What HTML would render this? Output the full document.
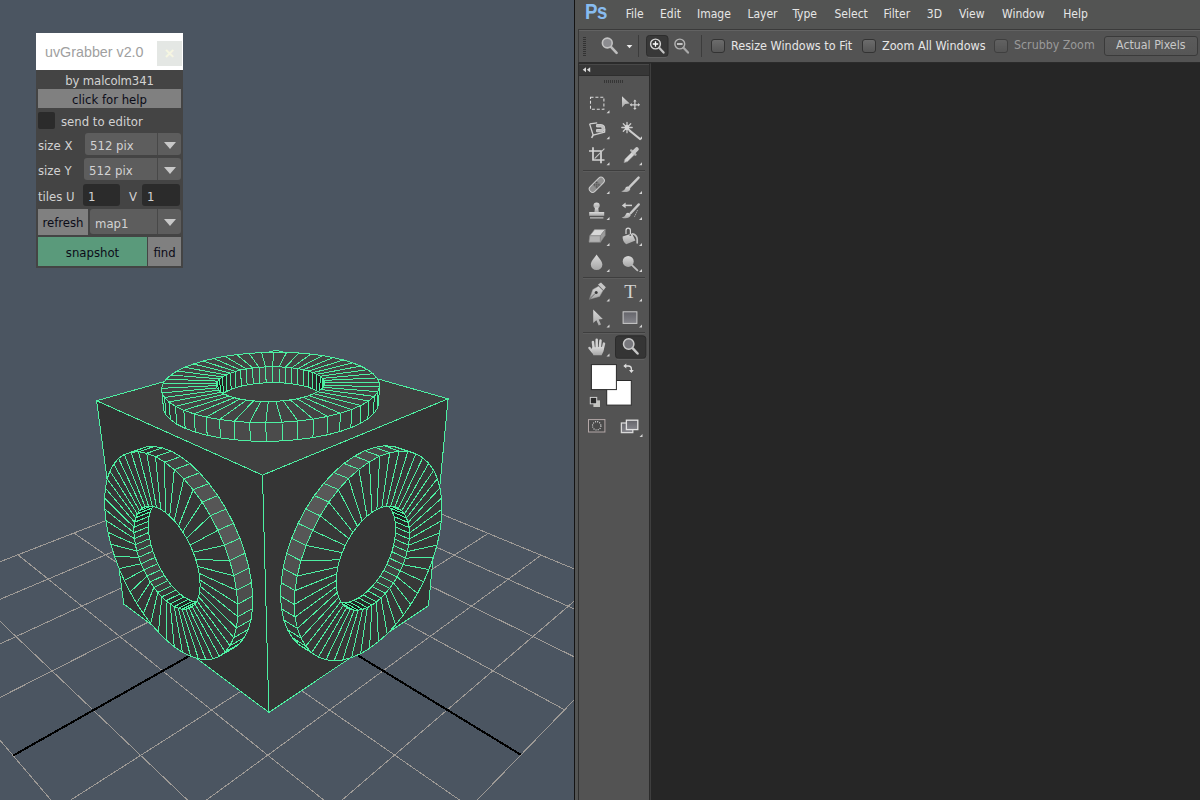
<!DOCTYPE html>
<html><head><meta charset="utf-8"><title>uvGrabber</title>
<style>
*{box-sizing:border-box;margin:0;padding:0}
html,body{width:1200px;height:800px;overflow:hidden;background:#4b5561;font-family:"DejaVu Sans Condensed","Liberation Sans",sans-serif}
.abs{position:absolute}
#maya{position:absolute;left:0;top:0;width:574px;height:800px;background:#4b5561;overflow:hidden}
#scene{position:absolute;left:0;top:0}
/* uvGrabber */
#uvg{position:absolute;left:36px;top:33px;width:147px;height:235px;background:#444;font-size:13px;color:#d2d2d2}
#uvg .title{position:absolute;left:0;top:0;width:147px;height:37px;background:#fff}
#uvg .title span{position:absolute;left:9px;top:10px;font-family:"Liberation Sans",sans-serif;font-size:14.3px;color:#a0a0a0;white-space:nowrap;line-height:18px}
#uvg .close{position:absolute;left:121px;top:8px;width:25px;height:25px;background:#e4e7e4;color:#f6f6e2;text-align:center;font-size:17px;font-weight:bold;line-height:25px;font-family:"Liberation Sans",sans-serif}
#uvg .t{position:absolute;white-space:nowrap;line-height:16px;margin-top:1px}
#uvg .btn{position:absolute;background:#808080;color:#0c0c18;text-align:center;white-space:nowrap;padding-top:1px}
#uvg .dd{position:absolute;background:#5d5d5d;border-radius:3px}
#uvg .dd i{position:absolute;right:23px;top:0;bottom:0;width:1px;background:#484848}
#uvg .dd b{position:absolute;right:5.5px;top:8.5px;width:0;height:0;border-left:6px solid transparent;border-right:6px solid transparent;border-top:7px solid #c8c8c8}
#uvg .fld{position:absolute;background:#2b2b2b;border-radius:3px}
/* photoshop */
#ps{position:absolute;left:575px;top:0;width:625px;height:800px;background:#535453;font-size:12px;color:#e6e6e6}
#ps .edge{position:absolute;left:-1px;top:0;width:1px;height:800px;background:#141414}
#ps .menu span{position:absolute;top:5.800px;line-height:16px;white-space:nowrap;font-size:12px}
#ps .logo{position:absolute;left:10px;top:-2px;font-family:"Liberation Sans",sans-serif;font-weight:bold;font-size:22.500px;color:#88bcf0;letter-spacing:-0.5px;line-height:28px;transform-origin:0 0;transform:scaleX(.83)}
#ps .opt{position:absolute;left:3px;top:29px;width:622px;height:34px;border-top:1px solid #3a3a3a;border-left:1px solid #3a3a3a;border-bottom:1px solid #2b2b2b;background:#535353;box-shadow:inset 0 1px 0 #626262}
#ps .cb{position:absolute;top:39px;width:14px;height:14px;border:1px solid #333;border-radius:3px;background:linear-gradient(#6c6c6c,#565656)}
#ps .lbl{position:absolute;top:37px;line-height:17px;white-space:nowrap;font-size:12.500px}
#ps .canvas{position:absolute;left:76px;top:63px;width:549px;height:737px;background:#262626}
#ps .tb{position:absolute;left:3px;top:63px;width:73px;height:737px;background:#535353;border-left:1px solid #2e2e2e;border-right:1px solid #3e3e3e;border-top:1px solid #2b2b2b;box-shadow:inset -1px 0 0 #2b2b2b}
#ps .tbh{position:absolute;left:4px;top:64px;width:70px;height:12px;background:#373737;border-top:1px solid #484848;border-bottom:1px solid #2e2e2e}
</style></head><body>
<div id="maya">
<svg id="scene" width="575" height="800" viewBox="0 0 575 800" shape-rendering="crispEdges">
<style>.g{stroke:#9e9a96;stroke-width:1}.ax{stroke:#000;stroke-width:2}.m polygon{stroke:#4df0a2;stroke-width:1;stroke-linejoin:round}</style>
<line class="g" x1="286.9" y1="450.3" x2="-114.1" y2="606.1"/>
<line class="g" x1="286.9" y1="450.3" x2="664.8" y2="606.3"/>
<line class="g" x1="320.5" y1="464.2" x2="-88.1" y2="636.5"/>
<line class="g" x1="251.4" y1="464.1" x2="635.5" y2="636.5"/>
<line class="g" x1="357.1" y1="479.3" x2="-58.8" y2="671.0"/>
<line class="g" x1="212.9" y1="479.0" x2="602.4" y2="670.7"/>
<line class="g" x1="396.9" y1="495.7" x2="-25.4" y2="710.3"/>
<line class="g" x1="170.8" y1="495.4" x2="564.6" y2="709.8"/>
<line class="g" x1="488.3" y1="533.4" x2="57.9" y2="808.2"/>
<line class="g" x1="74.0" y1="533.0" x2="470.1" y2="807.3"/>
<line class="g" x1="541.1" y1="555.2" x2="110.7" y2="870.1"/>
<line class="g" x1="17.9" y1="554.8" x2="410.1" y2="869.3"/>
<line class="g" x1="599.6" y1="579.4" x2="173.7" y2="944.2"/>
<line class="g" x1="-44.4" y1="579.0" x2="338.1" y2="943.6"/>
<line class="g" x1="664.8" y1="606.3" x2="250.3" y2="1034.3"/>
<line class="g" x1="-114.1" y1="606.1" x2="250.3" y2="1034.3"/>
<line class="ax" x1="440.5" y1="513.7" x2="13.1" y2="755.6"/>
<line class="ax" x1="124.7" y1="513.3" x2="520.9" y2="754.8"/>
<g class="m">
<polygon fill="#404040" points="276.2,350.1 448.1,398.8 262.5,475.1 96.6,400.7"/>
<polygon fill="#333333" points="123.8,604.1 268.9,712.4 262.5,475.1 96.6,400.7"/>
<polygon fill="#353535" points="428.5,605.7 268.9,712.4 262.5,475.1 448.1,398.8"/>
<polygon fill="#090909" points="217.2,402.4 217.5,400.1 216.6,383.4 216.3,385.6"/>
<polygon fill="#0f0f0f" points="217.5,400.1 218.6,397.7 217.7,381.1 216.6,383.4"/>
<polygon fill="#161616" points="218.6,397.7 220.6,395.4 219.7,378.9 217.7,381.1"/>
<polygon fill="#1e1e1e" points="220.6,395.4 223.4,393.3 222.6,376.9 219.7,378.9"/>
<polygon fill="#262626" points="223.4,393.3 227.0,391.2 226.2,374.9 222.6,376.9"/>
<polygon fill="#2d2d2d" points="227.0,391.2 231.2,389.3 230.4,373.1 226.2,374.9"/>
<polygon fill="#353535" points="231.2,389.3 236.0,387.7 235.3,371.5 230.4,373.1"/>
<polygon fill="#3b3b3b" points="236.0,387.7 241.3,386.2 240.7,370.1 235.3,371.5"/>
<polygon fill="#414141" points="241.3,386.2 247.1,385.0 246.5,369.0 240.7,370.1"/>
<polygon fill="#454545" points="247.1,385.0 253.2,384.0 252.7,368.0 246.5,369.0"/>
<polygon fill="#494949" points="253.2,384.0 259.6,383.3 259.1,367.3 252.7,368.0"/>
<polygon fill="#4b4b4b" points="259.6,383.3 266.1,382.8 265.7,366.9 259.1,367.3"/>
<polygon fill="#4c4c4c" points="266.1,382.8 272.6,382.7 272.3,366.7 265.7,366.9"/>
<polygon fill="#4b4b4b" points="272.6,382.7 279.2,382.8 279.0,366.8 272.3,366.7"/>
<polygon fill="#494949" points="279.2,382.8 285.6,383.1 285.5,367.2 279.0,366.8"/>
<polygon fill="#464646" points="285.6,383.1 291.9,383.8 291.8,367.8 285.5,367.2"/>
<polygon fill="#424242" points="291.9,383.8 297.8,384.7 297.8,368.6 291.8,367.8"/>
<polygon fill="#3d3d3d" points="297.8,384.7 303.3,385.8 303.3,369.7 297.8,368.6"/>
<polygon fill="#373737" points="303.3,385.8 308.4,387.2 308.5,371.0 303.3,369.7"/>
<polygon fill="#303030" points="308.4,387.2 312.9,388.9 313.0,372.6 308.5,371.0"/>
<polygon fill="#282828" points="312.9,388.9 316.7,390.7 316.9,374.3 313.0,372.6"/>
<polygon fill="#212121" points="316.7,390.7 319.9,392.7 320.1,376.2 316.9,374.3"/>
<polygon fill="#191919" points="319.9,392.7 322.2,394.9 322.4,378.3 320.1,376.2"/>
<polygon fill="#121212" points="322.2,394.9 323.7,397.1 324.0,380.4 322.4,378.3"/>
<polygon fill="#0b0b0b" points="323.7,397.1 324.4,399.5 324.6,382.7 324.0,380.4"/>
<polygon fill="#444444" points="309.0,395.6 303.4,397.3 340.2,413.3 351.5,409.5"/>
<polygon fill="#444444" points="303.4,397.3 297.2,398.8 327.3,416.5 340.2,413.3"/>
<polygon fill="#444444" points="297.2,398.8 290.4,399.9 313.1,419.1 327.3,416.5"/>
<polygon fill="#444444" points="290.4,399.9 283.2,400.8 297.9,421.0 313.1,419.1"/>
<polygon fill="#444444" points="283.2,400.8 275.8,401.3 282.0,422.2 297.9,421.0"/>
<polygon fill="#444444" points="275.8,401.3 268.3,401.5 265.8,422.7 282.0,422.2"/>
<polygon fill="#444444" points="268.3,401.5 260.8,401.4 249.7,422.4 265.8,422.7"/>
<polygon fill="#444444" points="260.8,401.4 253.5,400.9 234.2,421.3 249.7,422.4"/>
<polygon fill="#444444" points="253.5,400.9 246.5,400.1 219.5,419.5 234.2,421.3"/>
<polygon fill="#444444" points="246.5,400.1 240.0,399.1 206.0,417.0 219.5,419.5"/>
<polygon fill="#444444" points="240.0,399.1 234.2,397.7 194.0,413.9 206.0,417.0"/>
<polygon fill="#444444" points="234.2,397.7 229.0,396.1 183.8,410.3 194.0,413.9"/>
<polygon fill="#444444" points="229.0,396.1 224.7,394.2 175.4,406.3 183.8,410.3"/>
<polygon fill="#444444" points="224.7,394.2 221.2,392.3 168.9,402.0 175.4,406.3"/>
<polygon fill="#444444" points="221.2,392.3 218.6,390.1 164.5,397.5 168.9,402.0"/>
<polygon fill="#444444" points="218.6,390.1 217.0,387.9 162.1,392.9 164.5,397.5"/>
<polygon fill="#444444" points="217.0,387.9 216.3,385.6 161.6,388.3 162.1,392.9"/>
<polygon fill="#444444" points="216.3,385.6 216.6,383.4 163.0,383.7 161.6,388.3"/>
<polygon fill="#444444" points="216.6,383.4 217.7,381.1 166.1,379.2 163.0,383.7"/>
<polygon fill="#444444" points="217.7,381.1 219.7,378.9 170.9,375.0 166.1,379.2"/>
<polygon fill="#444444" points="219.7,378.9 222.6,376.9 177.2,371.0 170.9,375.0"/>
<polygon fill="#444444" points="222.6,376.9 226.2,374.9 184.7,367.3 177.2,371.0"/>
<polygon fill="#444444" points="226.2,374.9 230.4,373.1 193.5,364.0 184.7,367.3"/>
<polygon fill="#444444" points="230.4,373.1 235.3,371.5 203.2,361.0 193.5,364.0"/>
<polygon fill="#444444" points="235.3,371.5 240.7,370.1 213.8,358.5 203.2,361.0"/>
<polygon fill="#444444" points="240.7,370.1 246.5,369.0 225.0,356.3 213.8,358.5"/>
<polygon fill="#444444" points="246.5,369.0 252.7,368.0 236.8,354.6 225.0,356.3"/>
<polygon fill="#444444" points="252.7,368.0 259.1,367.3 249.0,353.4 236.8,354.6"/>
<polygon fill="#444444" points="259.1,367.3 265.7,366.9 261.5,352.6 249.0,353.4"/>
<polygon fill="#444444" points="265.7,366.9 272.3,366.7 274.0,352.3 261.5,352.6"/>
<polygon fill="#444444" points="272.3,366.7 279.0,366.8 286.6,352.4 274.0,352.3"/>
<polygon fill="#444444" points="279.0,366.8 285.5,367.2 298.9,353.0 286.6,352.4"/>
<polygon fill="#444444" points="285.5,367.2 291.8,367.8 310.9,354.1 298.9,353.0"/>
<polygon fill="#444444" points="291.8,367.8 297.8,368.6 322.4,355.6 310.9,354.1"/>
<polygon fill="#444444" points="297.8,368.6 303.3,369.7 333.3,357.6 322.4,355.6"/>
<polygon fill="#444444" points="303.3,369.7 308.5,371.0 343.5,360.0 333.3,357.6"/>
<polygon fill="#444444" points="308.5,371.0 313.0,372.6 352.7,362.9 343.5,360.0"/>
<polygon fill="#444444" points="313.0,372.6 316.9,374.3 360.8,366.1 352.7,362.9"/>
<polygon fill="#444444" points="316.9,374.3 320.1,376.2 367.6,369.7 360.8,366.1"/>
<polygon fill="#444444" points="320.1,376.2 322.4,378.3 373.1,373.7 367.6,369.7"/>
<polygon fill="#444444" points="322.4,378.3 324.0,380.4 376.9,377.9 373.1,373.7"/>
<polygon fill="#444444" points="324.0,380.4 324.6,382.7 379.1,382.4 376.9,377.9"/>
<polygon fill="#444444" points="324.6,382.7 324.3,385.0 379.4,387.0 379.1,382.4"/>
<polygon fill="#444444" points="324.3,385.0 323.1,387.3 377.8,391.7 379.4,387.0"/>
<polygon fill="#444444" points="323.1,387.3 320.9,389.5 374.3,396.4 377.8,391.7"/>
<polygon fill="#444444" points="320.9,389.5 317.8,391.7 368.6,401.0 374.3,396.4"/>
<polygon fill="#444444" points="317.8,391.7 313.8,393.8 361.0,405.4 368.6,401.0"/>
<polygon fill="#444444" points="313.8,393.8 309.0,395.6 351.5,409.5 361.0,405.4"/>
<polygon fill="#3e3e3e" points="350.9,427.7 339.8,431.6 340.2,413.3 351.5,409.5"/>
<polygon fill="#424242" points="339.8,431.6 327.0,434.9 327.3,416.5 340.2,413.3"/>
<polygon fill="#454545" points="327.0,434.9 313.0,437.6 313.1,419.1 327.3,416.5"/>
<polygon fill="#484848" points="313.0,437.6 297.9,439.6 297.9,421.0 313.1,419.1"/>
<polygon fill="#4a4a4a" points="297.9,439.6 282.2,440.9 282.0,422.2 297.9,421.0"/>
<polygon fill="#4b4b4b" points="282.2,440.9 266.2,441.4 265.8,422.7 282.0,422.2"/>
<polygon fill="#4b4b4b" points="266.2,441.4 250.4,441.0 249.7,422.4 265.8,422.7"/>
<polygon fill="#4a4a4a" points="250.4,441.0 235.0,439.8 234.2,421.3 249.7,422.4"/>
<polygon fill="#494949" points="235.0,439.8 220.5,437.9 219.5,419.5 234.2,421.3"/>
<polygon fill="#474747" points="220.5,437.9 207.2,435.3 206.0,417.0 219.5,419.5"/>
<polygon fill="#444444" points="207.2,435.3 195.3,432.1 194.0,413.9 206.0,417.0"/>
<polygon fill="#404040" points="195.3,432.1 185.2,428.3 183.8,410.3 194.0,413.9"/>
<polygon fill="#3d3d3d" points="185.2,428.3 176.8,424.1 175.4,406.3 183.8,410.3"/>
<polygon fill="#383838" points="176.8,424.1 170.4,419.6 168.9,402.0 175.4,406.3"/>
<polygon fill="#343434" points="170.4,419.6 166.0,414.9 164.5,397.5 168.9,402.0"/>
<polygon fill="#303030" points="166.0,414.9 163.6,410.0 162.1,392.9 164.5,397.5"/>
<polygon fill="#2c2c2c" points="163.6,410.0 163.1,405.1 161.6,388.3 162.1,392.9"/>
<polygon fill="#2a2a2a" points="378.6,404.1 377.0,409.0 377.8,391.7 379.4,387.0"/>
<polygon fill="#2e2e2e" points="377.0,409.0 373.4,413.9 374.3,396.4 377.8,391.7"/>
<polygon fill="#323232" points="373.4,413.9 367.9,418.8 368.6,401.0 374.3,396.4"/>
<polygon fill="#363636" points="367.9,418.8 360.4,423.4 361.0,405.4 368.6,401.0"/>
<polygon fill="#3a3a3a" points="360.4,423.4 350.9,427.7 351.5,409.5 361.0,405.4"/>
<polygon fill="#090909" points="160.0,500.8 156.9,502.4 142.0,508.3 145.1,506.7"/>
<polygon fill="#0e0e0e" points="156.9,502.4 154.2,504.8 139.4,510.7 142.0,508.3"/>
<polygon fill="#151515" points="154.2,504.8 152.0,508.0 137.3,513.9 139.4,510.7"/>
<polygon fill="#1c1c1c" points="152.0,508.0 150.3,511.9 135.7,517.7 137.3,513.9"/>
<polygon fill="#232323" points="150.3,511.9 149.1,516.3 134.6,522.2 135.7,517.7"/>
<polygon fill="#2a2a2a" points="149.1,516.3 148.4,521.3 134.0,527.2 134.6,522.2"/>
<polygon fill="#313131" points="148.4,521.3 148.3,526.8 133.9,532.7 134.0,527.2"/>
<polygon fill="#373737" points="148.3,526.8 148.7,532.5 134.4,538.6 133.9,532.7"/>
<polygon fill="#3c3c3c" points="148.7,532.5 149.6,538.6 135.4,544.7 134.4,538.6"/>
<polygon fill="#404040" points="149.6,538.6 151.0,544.8 136.8,551.0 135.4,544.7"/>
<polygon fill="#434343" points="151.0,544.8 152.8,551.1 138.7,557.3 136.8,551.0"/>
<polygon fill="#454545" points="152.8,551.1 155.1,557.4 141.1,563.7 138.7,557.3"/>
<polygon fill="#464646" points="155.1,557.4 157.8,563.6 143.8,570.0 141.1,563.7"/>
<polygon fill="#464646" points="157.8,563.6 160.9,569.6 146.9,576.1 143.8,570.0"/>
<polygon fill="#444444" points="160.9,569.6 164.2,575.4 150.3,581.9 146.9,576.1"/>
<polygon fill="#424242" points="164.2,575.4 167.9,580.7 153.9,587.4 150.3,581.9"/>
<polygon fill="#3e3e3e" points="167.9,580.7 171.7,585.7 157.8,592.4 153.9,587.4"/>
<polygon fill="#393939" points="171.7,585.7 175.8,590.1 161.8,596.9 157.8,592.4"/>
<polygon fill="#343434" points="175.8,590.1 179.9,593.9 166.0,600.8 161.8,596.9"/>
<polygon fill="#2e2e2e" points="179.9,593.9 184.1,597.1 170.1,604.0 166.0,600.8"/>
<polygon fill="#272727" points="184.1,597.1 188.3,599.5 174.3,606.6 170.1,604.0"/>
<polygon fill="#202020" points="188.3,599.5 192.4,601.2 178.3,608.3 174.3,606.6"/>
<polygon fill="#181818" points="192.4,601.2 196.3,602.1 182.2,609.2 178.3,608.3"/>
<polygon fill="#121212" points="196.3,602.1 200.0,602.1 185.9,609.3 182.2,609.2"/>
<polygon fill="#0c0c0c" points="200.0,602.1 203.4,601.2 189.2,608.5 185.9,609.3"/>
<polygon fill="#373737" points="199.9,580.0 199.1,573.4 236.5,590.3 237.8,604.1"/>
<polygon fill="#373737" points="199.1,573.4 197.7,566.5 233.8,575.7 236.5,590.3"/>
<polygon fill="#373737" points="197.7,566.5 195.7,559.4 229.7,560.6 233.8,575.7"/>
<polygon fill="#373737" points="195.7,559.4 193.2,552.2 224.4,545.3 229.7,560.6"/>
<polygon fill="#373737" points="193.2,552.2 190.1,545.2 217.9,530.3 224.4,545.3"/>
<polygon fill="#373737" points="190.1,545.2 186.6,538.3 210.4,515.7 217.9,530.3"/>
<polygon fill="#373737" points="186.6,538.3 182.7,531.9 202.1,502.1 210.4,515.7"/>
<polygon fill="#373737" points="182.7,531.9 178.6,526.0 193.1,489.7 202.1,502.1"/>
<polygon fill="#373737" points="178.6,526.0 174.2,520.6 183.8,478.8 193.1,489.7"/>
<polygon fill="#373737" points="174.2,520.6 169.7,516.1 174.3,469.6 183.8,478.8"/>
<polygon fill="#373737" points="169.7,516.1 165.2,512.3 164.8,462.2 174.3,469.6"/>
<polygon fill="#373737" points="165.2,512.3 160.7,509.3 155.5,456.7 164.8,462.2"/>
<polygon fill="#373737" points="160.7,509.3 156.4,507.3 146.7,453.3 155.5,456.7"/>
<polygon fill="#373737" points="156.4,507.3 152.3,506.2 138.5,451.8 146.7,453.3"/>
<polygon fill="#373737" points="152.3,506.2 148.5,506.0 131.0,452.2 138.5,451.8"/>
<polygon fill="#373737" points="148.5,506.0 145.1,506.7 124.3,454.5 131.0,452.2"/>
<polygon fill="#373737" points="145.1,506.7 142.0,508.3 118.6,458.4 124.3,454.5"/>
<polygon fill="#373737" points="142.0,508.3 139.4,510.7 113.8,464.0 118.6,458.4"/>
<polygon fill="#373737" points="139.4,510.7 137.3,513.9 109.9,470.9 113.8,464.0"/>
<polygon fill="#373737" points="137.3,513.9 135.7,517.7 107.2,479.0 109.9,470.9"/>
<polygon fill="#373737" points="135.7,517.7 134.6,522.2 105.4,488.2 107.2,479.0"/>
<polygon fill="#373737" points="134.6,522.2 134.0,527.2 104.6,498.3 105.4,488.2"/>
<polygon fill="#373737" points="134.0,527.2 133.9,532.7 104.8,509.1 104.6,498.3"/>
<polygon fill="#373737" points="133.9,532.7 134.4,538.6 105.9,520.5 104.8,509.1"/>
<polygon fill="#373737" points="134.4,538.6 135.4,544.7 108.0,532.3 105.9,520.5"/>
<polygon fill="#373737" points="135.4,544.7 136.8,551.0 110.9,544.3 108.0,532.3"/>
<polygon fill="#373737" points="136.8,551.0 138.7,557.3 114.6,556.5 110.9,544.3"/>
<polygon fill="#373737" points="138.7,557.3 141.1,563.7 119.1,568.6 114.6,556.5"/>
<polygon fill="#373737" points="141.1,563.7 143.8,570.0 124.3,580.5 119.1,568.6"/>
<polygon fill="#373737" points="143.8,570.0 146.9,576.1 130.1,592.0 124.3,580.5"/>
<polygon fill="#373737" points="146.9,576.1 150.3,581.9 136.5,603.1 130.1,592.0"/>
<polygon fill="#373737" points="150.3,581.9 153.9,587.4 143.4,613.6 136.5,603.1"/>
<polygon fill="#373737" points="153.9,587.4 157.8,592.4 150.7,623.4 143.4,613.6"/>
<polygon fill="#373737" points="157.8,592.4 161.8,596.9 158.4,632.2 150.7,623.4"/>
<polygon fill="#373737" points="161.8,596.9 166.0,600.8 166.3,640.1 158.4,632.2"/>
<polygon fill="#373737" points="166.0,600.8 170.1,604.0 174.3,646.8 166.3,640.1"/>
<polygon fill="#373737" points="170.1,604.0 174.3,606.6 182.5,652.3 174.3,646.8"/>
<polygon fill="#373737" points="174.3,606.6 178.3,608.3 190.5,656.3 182.5,652.3"/>
<polygon fill="#373737" points="178.3,608.3 182.2,609.2 198.4,658.8 190.5,656.3"/>
<polygon fill="#373737" points="182.2,609.2 185.9,609.3 205.9,659.7 198.4,658.8"/>
<polygon fill="#373737" points="185.9,609.3 189.2,608.5 213.0,658.9 205.9,659.7"/>
<polygon fill="#373737" points="189.2,608.5 192.3,606.9 219.4,656.3 213.0,658.9"/>
<polygon fill="#373737" points="192.3,606.9 194.9,604.3 225.2,651.9 219.4,656.3"/>
<polygon fill="#373737" points="194.9,604.3 197.0,600.9 230.0,645.7 225.2,651.9"/>
<polygon fill="#373737" points="197.0,600.9 198.6,596.7 233.8,637.7 230.0,645.7"/>
<polygon fill="#373737" points="198.6,596.7 199.6,591.8 236.4,628.0 233.8,637.7"/>
<polygon fill="#373737" points="199.6,591.8 200.1,586.2 237.8,616.7 236.4,628.0"/>
<polygon fill="#373737" points="200.1,586.2 199.9,580.0 237.8,604.1 237.8,616.7"/>
<polygon fill="#4d4d4d" points="252.7,596.1 251.6,582.5 236.5,590.3 237.8,604.1"/>
<polygon fill="#515151" points="251.6,582.5 249.0,568.1 233.8,575.7 236.5,590.3"/>
<polygon fill="#555555" points="249.0,568.1 245.1,553.2 229.7,560.6 233.8,575.7"/>
<polygon fill="#575757" points="245.1,553.2 239.9,538.1 224.4,545.3 229.7,560.6"/>
<polygon fill="#585858" points="239.9,538.1 233.5,523.3 217.9,530.3 224.4,545.3"/>
<polygon fill="#585858" points="233.5,523.3 226.1,509.0 210.4,515.7 217.9,530.3"/>
<polygon fill="#565656" points="226.1,509.0 217.8,495.6 202.1,502.1 210.4,515.7"/>
<polygon fill="#535353" points="217.8,495.6 208.9,483.5 193.1,489.7 202.1,502.1"/>
<polygon fill="#4e4e4e" points="208.9,483.5 199.6,472.8 183.8,478.8 193.1,489.7"/>
<polygon fill="#494949" points="199.6,472.8 190.1,463.7 174.3,469.6 183.8,478.8"/>
<polygon fill="#434343" points="190.1,463.7 180.6,456.5 164.8,462.2 174.3,469.6"/>
<polygon fill="#3d3d3d" points="180.6,456.5 171.3,451.2 155.5,456.7 164.8,462.2"/>
<polygon fill="#363636" points="171.3,451.2 162.4,447.9 146.7,453.3 155.5,456.7"/>
<polygon fill="#303030" points="162.4,447.9 154.0,446.5 138.5,451.8 146.7,453.3"/>
<polygon fill="#2a2a2a" points="154.0,446.5 146.4,447.0 131.0,452.2 138.5,451.8"/>
<polygon fill="#242424" points="146.4,447.0 139.6,449.3 124.3,454.5 131.0,452.2"/>
<polygon fill="#282828" points="233.5,648.2 239.3,643.8 225.2,651.9 219.4,656.3"/>
<polygon fill="#2e2e2e" points="239.3,643.8 244.3,637.5 230.0,645.7 225.2,651.9"/>
<polygon fill="#343434" points="244.3,637.5 248.2,629.5 233.8,637.7 230.0,645.7"/>
<polygon fill="#3b3b3b" points="248.2,629.5 251.0,619.8 236.4,628.0 233.8,637.7"/>
<polygon fill="#414141" points="251.0,619.8 252.5,608.6 237.8,616.7 236.4,628.0"/>
<polygon fill="#474747" points="252.5,608.6 252.7,596.1 237.8,604.1 237.8,616.7"/>
<polygon fill="#080808" points="380.6,500.8 384.3,502.4 398.5,508.4 394.9,506.8"/>
<polygon fill="#0c0c0c" points="384.3,502.4 387.6,504.9 401.7,510.8 398.5,508.4"/>
<polygon fill="#121212" points="387.6,504.9 390.3,508.1 404.4,514.0 401.7,510.8"/>
<polygon fill="#191919" points="390.3,508.1 392.5,512.0 406.5,517.9 404.4,514.0"/>
<polygon fill="#202020" points="392.5,512.0 394.1,516.5 408.0,522.5 406.5,517.9"/>
<polygon fill="#262626" points="394.1,516.5 395.1,521.6 409.0,527.6 408.0,522.5"/>
<polygon fill="#2d2d2d" points="395.1,521.6 395.6,527.1 409.4,533.1 409.0,527.6"/>
<polygon fill="#333333" points="395.6,527.1 395.5,532.9 409.2,539.1 409.4,533.1"/>
<polygon fill="#383838" points="395.5,532.9 394.8,539.1 408.5,545.3 409.2,539.1"/>
<polygon fill="#3c3c3c" points="394.8,539.1 393.6,545.4 407.2,551.6 408.5,545.3"/>
<polygon fill="#3f3f3f" points="393.6,545.4 391.8,551.7 405.4,558.1 407.2,551.6"/>
<polygon fill="#424242" points="391.8,551.7 389.5,558.1 403.1,564.6 405.4,558.1"/>
<polygon fill="#434343" points="389.5,558.1 386.8,564.4 400.3,570.9 403.1,564.6"/>
<polygon fill="#434343" points="386.8,564.4 383.6,570.4 397.1,577.0 400.3,570.9"/>
<polygon fill="#424242" points="383.6,570.4 380.1,576.2 393.5,582.9 397.1,577.0"/>
<polygon fill="#404040" points="380.1,576.2 376.2,581.6 389.6,588.4 393.5,582.9"/>
<polygon fill="#3d3d3d" points="376.2,581.6 372.1,586.5 385.4,593.4 389.6,588.4"/>
<polygon fill="#393939" points="372.1,586.5 367.7,590.9 381.0,598.0 385.4,593.4"/>
<polygon fill="#333333" points="367.7,590.9 363.2,594.8 376.5,601.9 381.0,598.0"/>
<polygon fill="#2e2e2e" points="363.2,594.8 358.6,597.9 371.9,605.1 376.5,601.9"/>
<polygon fill="#272727" points="358.6,597.9 353.9,600.3 367.3,607.6 371.9,605.1"/>
<polygon fill="#212121" points="353.9,600.3 349.4,602.0 362.7,609.3 367.3,607.6"/>
<polygon fill="#1a1a1a" points="349.4,602.0 344.9,602.8 358.3,610.2 362.7,609.3"/>
<polygon fill="#131313" points="344.9,602.8 340.7,602.8 354.1,610.3 358.3,610.2"/>
<polygon fill="#0d0d0d" points="340.7,602.8 336.7,601.9 350.1,609.4 354.1,610.3"/>
<polygon fill="#090909" points="336.7,601.9 333.1,600.2 346.6,607.7 350.1,609.4"/>
<polygon fill="#383838" points="336.2,580.6 336.7,573.9 295.0,590.6 294.3,604.4"/>
<polygon fill="#383838" points="336.7,573.9 337.8,567.0 297.2,576.0 295.0,590.6"/>
<polygon fill="#383838" points="337.8,567.0 339.7,559.8 300.9,560.8 297.2,576.0"/>
<polygon fill="#383838" points="339.7,559.8 342.2,552.6 306.1,545.5 300.9,560.8"/>
<polygon fill="#383838" points="342.2,552.6 345.3,545.5 312.6,530.4 306.1,545.5"/>
<polygon fill="#383838" points="345.3,545.5 348.9,538.6 320.2,515.8 312.6,530.4"/>
<polygon fill="#383838" points="348.9,538.6 352.9,532.2 328.9,502.1 320.2,515.8"/>
<polygon fill="#383838" points="352.9,532.2 357.4,526.2 338.4,489.6 328.9,502.1"/>
<polygon fill="#383838" points="357.4,526.2 362.1,520.8 348.5,478.6 338.4,489.6"/>
<polygon fill="#383838" points="362.1,520.8 367.0,516.2 358.9,469.3 348.5,478.6"/>
<polygon fill="#383838" points="367.0,516.2 371.9,512.4 369.4,461.8 358.9,469.3"/>
<polygon fill="#383838" points="371.9,512.4 376.9,509.4 379.7,456.2 369.4,461.8"/>
<polygon fill="#383838" points="376.9,509.4 381.8,507.4 389.7,452.7 379.7,456.2"/>
<polygon fill="#383838" points="381.8,507.4 386.4,506.2 399.1,451.1 389.7,452.7"/>
<polygon fill="#383838" points="386.4,506.2 390.8,506.0 407.9,451.5 399.1,451.1"/>
<polygon fill="#383838" points="390.8,506.0 394.9,506.8 415.8,453.8 407.9,451.5"/>
<polygon fill="#383838" points="394.9,506.8 398.5,508.4 422.8,457.7 415.8,453.8"/>
<polygon fill="#383838" points="398.5,508.4 401.7,510.8 428.7,463.3 422.8,457.7"/>
<polygon fill="#383838" points="401.7,510.8 404.4,514.0 433.6,470.3 428.7,463.3"/>
<polygon fill="#383838" points="404.4,514.0 406.5,517.9 437.4,478.6 433.6,470.3"/>
<polygon fill="#383838" points="406.5,517.9 408.0,522.5 440.0,488.0 437.4,478.6"/>
<polygon fill="#383838" points="408.0,522.5 409.0,527.6 441.5,498.2 440.0,488.0"/>
<polygon fill="#383838" points="409.0,527.6 409.4,533.1 442.0,509.3 441.5,498.2"/>
<polygon fill="#383838" points="409.4,533.1 409.2,539.1 441.3,520.8 442.0,509.3"/>
<polygon fill="#383838" points="409.2,539.1 408.5,545.3 439.7,532.8 441.3,520.8"/>
<polygon fill="#383838" points="408.5,545.3 407.2,551.6 437.0,545.1 439.7,532.8"/>
<polygon fill="#383838" points="407.2,551.6 405.4,558.1 433.4,557.4 437.0,545.1"/>
<polygon fill="#383838" points="405.4,558.1 403.1,564.6 428.9,569.6 433.4,557.4"/>
<polygon fill="#383838" points="403.1,564.6 400.3,570.9 423.6,581.7 428.9,569.6"/>
<polygon fill="#383838" points="400.3,570.9 397.1,577.0 417.5,593.4 423.6,581.7"/>
<polygon fill="#383838" points="397.1,577.0 393.5,582.9 410.8,604.5 417.5,593.4"/>
<polygon fill="#383838" points="393.5,582.9 389.6,588.4 403.4,615.1 410.8,604.5"/>
<polygon fill="#383838" points="389.6,588.4 385.4,593.4 395.5,624.9 403.4,615.1"/>
<polygon fill="#383838" points="385.4,593.4 381.0,598.0 387.2,633.8 395.5,624.9"/>
<polygon fill="#383838" points="381.0,598.0 376.5,601.9 378.5,641.6 387.2,633.8"/>
<polygon fill="#383838" points="376.5,601.9 371.9,605.1 369.6,648.3 378.5,641.6"/>
<polygon fill="#383838" points="371.9,605.1 367.3,607.6 360.6,653.7 369.6,648.3"/>
<polygon fill="#383838" points="367.3,607.6 362.7,609.3 351.6,657.6 360.6,653.7"/>
<polygon fill="#383838" points="362.7,609.3 358.3,610.2 342.7,660.0 351.6,657.6"/>
<polygon fill="#383838" points="358.3,610.2 354.1,610.3 334.1,660.8 342.7,660.0"/>
<polygon fill="#383838" points="354.1,610.3 350.1,609.4 326.0,659.8 334.1,660.8"/>
<polygon fill="#383838" points="350.1,609.4 346.6,607.7 318.4,657.1 326.0,659.8"/>
<polygon fill="#383838" points="346.6,607.7 343.4,605.1 311.6,652.6 318.4,657.1"/>
<polygon fill="#383838" points="343.4,605.1 340.8,601.6 305.8,646.2 311.6,652.6"/>
<polygon fill="#383838" points="340.8,601.6 338.7,597.4 301.0,638.1 305.8,646.2"/>
<polygon fill="#383838" points="338.7,597.4 337.2,592.4 297.4,628.4 301.0,638.1"/>
<polygon fill="#383838" points="337.2,592.4 336.3,586.8 295.1,617.0 297.4,628.4"/>
<polygon fill="#383838" points="336.3,586.8 336.2,580.6 294.3,604.4 295.1,617.0"/>
<polygon fill="#474747" points="280.5,596.2 281.1,582.6 295.0,590.6 294.3,604.4"/>
<polygon fill="#4c4c4c" points="281.1,582.6 283.1,568.2 297.2,576.0 295.0,590.6"/>
<polygon fill="#505050" points="283.1,568.2 286.7,553.3 300.9,560.8 297.2,576.0"/>
<polygon fill="#535353" points="286.7,553.3 291.7,538.2 306.1,545.5 300.9,560.8"/>
<polygon fill="#565656" points="291.7,538.2 298.1,523.3 312.6,530.4 306.1,545.5"/>
<polygon fill="#575757" points="298.1,523.3 305.7,509.0 320.2,515.8 312.6,530.4"/>
<polygon fill="#585858" points="305.7,509.0 314.3,495.6 328.9,502.1 320.2,515.8"/>
<polygon fill="#585858" points="314.3,495.6 323.7,483.3 338.4,489.6 328.9,502.1"/>
<polygon fill="#565656" points="323.7,483.3 333.7,472.5 348.5,478.6 338.4,489.6"/>
<polygon fill="#545454" points="333.7,472.5 344.0,463.4 358.9,469.3 348.5,478.6"/>
<polygon fill="#515151" points="344.0,463.4 354.5,456.1 369.4,461.8 358.9,469.3"/>
<polygon fill="#4d4d4d" points="354.5,456.1 364.8,450.7 379.7,456.2 369.4,461.8"/>
<polygon fill="#494949" points="364.8,450.7 374.8,447.3 389.7,452.7 379.7,456.2"/>
<polygon fill="#444444" points="374.8,447.3 384.3,445.8 399.1,451.1 389.7,452.7"/>
<polygon fill="#3e3e3e" points="384.3,445.8 393.1,446.3 407.9,451.5 399.1,451.1"/>
<polygon fill="#393939" points="393.1,446.3 401.1,448.6 415.8,453.8 407.9,451.5"/>
<polygon fill="#272727" points="305.3,648.8 298.4,644.2 311.6,652.6 318.4,657.1"/>
<polygon fill="#2c2c2c" points="298.4,644.2 292.5,637.8 305.8,646.2 311.6,652.6"/>
<polygon fill="#313131" points="292.5,637.8 287.5,629.7 301.0,638.1 305.8,646.2"/>
<polygon fill="#373737" points="287.5,629.7 283.8,620.0 297.4,628.4 301.0,638.1"/>
<polygon fill="#3d3d3d" points="283.8,620.0 281.5,608.8 295.1,617.0 297.4,628.4"/>
<polygon fill="#424242" points="281.5,608.8 280.5,596.2 294.3,604.4 295.1,617.0"/>
</g></svg>
<div id="uvg">
 <div class="title"><span>uvGrabber v2.0</span><div class="close">×</div></div>
 <div class="t" style="left:0;width:147px;text-align:center;top:39px;letter-spacing:-.15px">by malcolm341</div>
 <div class="btn" style="left:2px;top:56px;width:143px;height:19px;line-height:19px">click for help</div>
 <div class="fld" style="left:2px;top:79px;width:17px;height:17px;border-radius:2px"></div>
 <div class="t" style="left:25px;top:80px">send to editor</div>
 <div class="t" style="left:2px;top:104px">size X</div>
 <div class="dd" style="left:49px;top:100px;width:96px;height:22px"><span class="t" style="left:5px;top:4px">512 pix</span><i></i><b></b></div>
 <div class="t" style="left:2px;top:129px">size Y</div>
 <div class="dd" style="left:48px;top:125px;width:97px;height:22px"><span class="t" style="left:5px;top:4px">512 pix</span><i></i><b></b></div>
 <div class="t" style="left:2px;top:155px">tiles U</div>
 <div class="fld" style="left:47px;top:151px;width:37px;height:22px"><span class="t" style="left:5px;top:4px">1</span></div>
 <div class="t" style="left:93px;top:155px">V</div>
 <div class="fld" style="left:106px;top:151px;width:38px;height:22px"><span class="t" style="left:5px;top:4px">1</span></div>
 <div class="btn" style="left:2px;top:176px;width:50px;height:26px;line-height:26px">refresh</div>
 <div class="dd" style="left:54px;top:176px;width:91px;height:25px"><span class="t" style="left:5px;top:6px">map1</span><i></i><b style="top:10px"></b></div>
 <div class="btn" style="left:2px;top:204px;width:109px;height:29px;line-height:29px;background:#5a9a7b">snapshot</div>
 <div class="btn" style="left:112px;top:204px;width:33px;height:29px;line-height:29px">find</div>
</div>
</div>
<div id="ps">
 <div class="edge"></div>
 <div class="logo">Ps</div>
 <div class="menu">
  <span style="left:50.700px">File</span><span style="left:85px">Edit</span><span style="left:122px">Image</span><span style="left:172.400px">Layer</span><span style="left:217.400px">Type</span><span style="left:259.500px">Select</span><span style="left:308.500px">Filter</span><span style="left:351.800px">3D</span><span style="left:384px">View</span><span style="left:427px">Window</span><span style="left:488.200px">Help</span>
 </div>
 <div class="opt"></div>
 <div class="canvas"></div>
 <div class="tb"></div>
 <div class="tbh"></div>
 <svg class="abs" style="left:0;top:0" width="625" height="800" viewBox="575 0 625 800">
<defs>
<linearGradient id="ig" x1="0" y1="0" x2="0" y2="1"><stop offset="0" stop-color="#dadada"/><stop offset="1" stop-color="#a6a6a6"/></linearGradient>
<linearGradient id="rg" x1="0" y1="0" x2="0" y2="1"><stop offset="0" stop-color="#64646a"/><stop offset="1" stop-color="#85858b"/></linearGradient>
<path id="tri" d="M3 0V3H0Z" fill="#d4d4d4"/>
</defs>
<!-- options bar -->
<g stroke="#333" stroke-width="1" shape-rendering="crispEdges"><path d="M583 37.5h3M583 39.5h3M583 41.5h3M583 43.5h3M583 45.5h3M583 47.5h3M583 49.5h3M583 51.5h3M583 53.5h3M583 55.5h3"/></g>
<g><circle cx="607.3" cy="43" r="4.9" fill="#8c8c90" stroke="#c2c2c2" stroke-width="1.6"/><path d="M611.2 47.2L616.6 52.8" stroke="#bdbdbd" stroke-width="2.6" stroke-linecap="round"/></g>
<path d="M626.6 45h5.8l-2.9 3.2z" fill="#ececec"/>
<path d="M638.5 35v22M701.5 35v22" stroke="#3c3c3c" stroke-width="1" shape-rendering="crispEdges"/>
<rect x="646.5" y="35.5" width="21.5" height="21" rx="3" fill="#383838" stroke="#2d2d2d"/><path d="M648 57.3h18.5" stroke="#646464" stroke-width="1"/>
<g fill="none" stroke="#d6d6d6"><circle cx="655.5" cy="44" r="4.9" stroke-width="1.4"/><path d="M659.2 47.8L663.6 52.6" stroke-width="2.2" stroke-linecap="round" stroke="#c4c4c4"/><path d="M652.8 44h5.4M655.5 41.3v5.4" stroke="#fff" stroke-width="1.3"/></g>
<g fill="none" stroke="#b4b4b4"><circle cx="679.8" cy="44" r="4.9" stroke-width="1.4"/><path d="M683.5 47.8L688 52.6" stroke-width="2.2" stroke-linecap="round" stroke="#aaa"/><path d="M677 44h5.6" stroke="#e0e0e0" stroke-width="1.6"/></g>
<!-- toolbar header arrows + grip -->
<path d="M586 67.3v5l-3.3-2.5zM590.2 67.3v5l-3.3-2.5z" fill="#d8d8d8"/>
<path d="M604.5 80v3M606.5 80v3M608.5 80v3M610.5 80v3M612.5 80v3M614.5 80v3M616.5 80v3M618.5 80v3M620.5 80v3M622.5 80v3" stroke="#353535" stroke-width="1" shape-rendering="crispEdges"/>
<!-- separators -->
<g shape-rendering="crispEdges"><path d="M583 170.5h62M583 277.5h62M583 332.5h62" stroke="#3e3e3e"/><path d="M583 171.5h62M583 278.5h62M583 333.5h62" stroke="#5c5c5c"/></g>
<!-- corner triangles -->
<use href="#tri" x="606.5" y="110.3"/><use href="#tri" x="606.5" y="136.3"/><use href="#tri" x="639" y="136.3"/><use href="#tri" x="606.5" y="162.3"/><use href="#tri" x="639" y="162.3"/>
<use href="#tri" x="606.5" y="191"/><use href="#tri" x="639" y="191"/><use href="#tri" x="606.5" y="217"/><use href="#tri" x="639" y="217"/><use href="#tri" x="606.5" y="243"/><use href="#tri" x="639" y="243"/><use href="#tri" x="606.5" y="269"/><use href="#tri" x="639" y="269"/>
<use href="#tri" x="606.5" y="298.5"/><use href="#tri" x="639" y="298.5"/><use href="#tri" x="606.5" y="324.5"/><use href="#tri" x="639" y="324.5"/><use href="#tri" x="606.5" y="353.5"/><use href="#tri" x="639.5" y="434"/>
<!-- row1: marquee, move -->
<rect x="590.5" y="97.3" width="13.4" height="11.9" fill="none" stroke="#dcdcdc" stroke-width="1.05" stroke-dasharray="3 1.9"/>
<path d="M622 96.3v11.200l3.100-3.400 4.600-.5z" fill="url(#ig)"/>
<g stroke="#d0d0d0" stroke-width="1.2" fill="#d0d0d0"><path d="M630.6 104.8h8.6M634.9 100.5v8.6" fill="none"/><path d="M634.9 99.6l1.7 2h-3.4zM634.9 110l1.7-2h-3.4zM629.7 104.8l2-1.7v3.4zM640.1 104.8l-2-1.7v3.4z" stroke="none"/></g>
<!-- row2: lasso, wand -->
<g fill="none" stroke="#cfcfcf" stroke-width="1.3" stroke-linejoin="round"><path d="M589.6 123.8l7.6-.9M589.6 123.8l3.6 11.4 11.4-3 .2-3.2"/><path d="M593.2 135.2l-1.6 2.6" stroke-width="1.6"/><path d="M596.6 124.6h4.6a3.6 3.6 0 0 1 0 7.2h-4.6v-2.3h4.3a1.3 1.3 0 0 0 0-2.6h-4.3z" fill="#bcbcbc" stroke-width="1"/></g>
<g stroke="#cdcdcd" stroke-linecap="round"><path d="M629.5 130.5L640 139" stroke-width="2.2"/><path d="M627 122.3v10.4M621.8 127.5h10.4M623.3 123.8l7.4 7.4M630.7 123.8l-7.4 7.4" stroke-width="1.3"/><circle cx="627" cy="127.5" r="2.4" fill="#d6d6d6" stroke="none"/></g>
<!-- row3: crop, eyedropper -->
<g fill="none" stroke="#d4d4d4" stroke-width="1.700"><path d="M593 147.300v12.700h11.500"/><path d="M589 151h12v12.300"/></g><path d="M594.6 158.6L604.4 148.6" stroke="#c4c4c4" stroke-width="1.1"/>
<g><path d="M624 162.6l1-3.6 7.4-7.4 2.6 2.6-7.4 7.4z" fill="#d6d6d6" stroke="#9a9a9a" stroke-width=".7"/><path d="M631.2 150.4l4.2 4.2" stroke="#b0b0b0" stroke-width="2.4" stroke-linecap="round"/><path d="M633.8 152.2l3-3" stroke="#c8c8c8" stroke-width="4" stroke-linecap="round"/></g>
<!-- row4: bandaid, brush -->
<g transform="rotate(-45 596.8 184.8)"><rect x="587.600" y="181.500" width="18.400" height="6.600" rx="3.200" fill="#8f8f8f" stroke="#cdcdcd" stroke-width="1"/><rect x="593.800" y="182" width="6" height="5.600" fill="#7c7c7c"/><g fill="#3e3e3e"><circle cx="595.3" cy="183.3" r=".6"/><circle cx="598.3" cy="183.3" r=".6"/><circle cx="595.3" cy="186.3" r=".6"/><circle cx="598.3" cy="186.3" r=".6"/><circle cx="596.8" cy="184.8" r=".6"/></g></g>
<g><path d="M638.6 177.6L629.4 187.2" stroke="#c9c9c9" stroke-width="2.4" stroke-linecap="round"/><path d="M621.200 191.200c2.600-.3 3.800-1.600 4.600-4 1.600-1.400 4-.5 4.600 1.700-1.200 3.200-5.600 4-9.200 2.300z" fill="url(#ig)"/></g>
<!-- row5: stamp, history brush -->
<g fill="url(#ig)"><circle cx="596.6" cy="205.6" r="3.1"/><path d="M595 207.6h3.200l.6 4.600h-4.400z"/><rect x="589.200" y="212" width="15" height="3.800"/><rect x="590" y="217.400" width="13.400" height="1.200"/></g>
<g><path d="M638.800 204.400L630.600 213.200" stroke="#c9c9c9" stroke-width="2.300" stroke-linecap="round"/><path d="M621.600 217.400c2.600-.3 3.800-1.600 4.600-4 1.600-1.400 4-.5 4.600 1.700-1.200 3.200-5.600 4-9.200 2.300z" fill="url(#ig)"/><path d="M632 205.400h-7.400" stroke="#cfcfcf" stroke-width="1.500" fill="none"/><path d="M621.800 205.400l3.800-2.800v5.600z" fill="#cfcfcf"/><path d="M637.400 210.400l-3 6.600" stroke="#ccc" stroke-width="1" stroke-dasharray="1 1.200"/></g>
<!-- row6: eraser, bucket -->
<g stroke="#8a8a8a" stroke-width=".6"><path d="M594.600 229.600h10.600l-4.800 6.200h-10.600z" fill="#d8d8d8"/><path d="M589.800 235.800h10.600v6.400h-11.400z" fill="#b2b2b2"/><path d="M600.400 235.800l4.800-6.200v5.600l-4.800 7z" fill="#9c9c9c"/></g>
<g><path d="M622.600 236.600l9.400-3.200 3.400 7.200-9.200 3.600c-2.400-1.400-3.800-4.400-3.600-7.600z" fill="url(#ig)"/><path d="M626 234v-3.600a2.200 2.200 0 0 1 4.400 0v4.600" fill="none" stroke="#d4d4d4" stroke-width="1.200"/><path d="M632.600 233.800c2.600.6 4.400 2.400 4.600 5.600v3.400" fill="none" stroke="#c0c0c0" stroke-width="1.700" stroke-linecap="round"/><circle cx="630.300" cy="235.200" r=".9" fill="#666"/></g>
<!-- row7: blur, dodge -->
<path d="M596.600 254.400c2 3.600 5.800 6.600 5.800 10.200a5.800 5.400 0 0 1-11.600 0c0-3.600 3.800-6.600 5.800-10.200z" fill="url(#ig)"/>
<g><circle cx="628.200" cy="261.400" r="5.500" fill="url(#ig)"/><path d="M632.200 265.400L637.400 270.400" stroke="#bdbdbd" stroke-width="1.800" stroke-linecap="round"/></g>
<!-- row8: pen, T -->
<g><path d="M589.400 299.200l3.400-9.600 5.800-3.400 4.400 4.400-3.400 5.800z" fill="url(#ig)" stroke="#999" stroke-width=".5"/><path d="M598 284.600l3-2.200 4.800 4.800-2.200 3z" fill="#c6c6c6"/><circle cx="596.200" cy="292.400" r="1.500" fill="#3a3a3a"/><path d="M589.600 299l5.600-5.600" stroke="#555" stroke-width=".8"/></g>
<text x="630.300" y="298" font-family="Liberation Serif,serif" font-size="19.500" fill="#d2d2d2" text-anchor="middle">T</text>
<!-- row9: arrow, rect -->
<path d="M593.200 309.400v13.600l3.200-2.800 2.300 5.400 2.300-1-2.300-5.200 4.100-.3z" fill="url(#ig)"/>
<rect x="623.100" y="311.800" width="13.800" height="11.600" fill="url(#rg)" stroke="#cacaca" stroke-width="1"/>
<!-- row10: hand, zoom selected -->
<g stroke="#c9c9c9" stroke-width="2.500" stroke-linecap="round" fill="none"><path d="M593.700 348.500L592.900 341.900" stroke="#d0d0d0"/><path d="M596.700 348V339.700" stroke="#d4d4d4"/><path d="M599.800 348L600.500 340.500" stroke="#d2d2d2"/><path d="M602.700 349L604 343.600"/><path d="M592.800 352L589.500 348"/></g><path d="M592 347.600l12-.8-.4 4.200-2 4.200h-8.200l-1.600-3.600z" fill="url(#ig)"/>
<rect x="615.500" y="335.800" width="30.300" height="22.600" rx="3" fill="#353535" stroke="#2b2b2b"/><path d="M617 359.300h27.500" stroke="#636363"/>
<g><circle cx="628.700" cy="344" r="5.200" fill="#77777c" stroke="#cacaca" stroke-width="1.500"/><path d="M632.800 348.400L637.600 353.500" stroke="#c6c6c6" stroke-width="2.500" stroke-linecap="round"/></g>
<!-- swatches -->
<rect x="606.700" y="380.500" width="24.600" height="24.600" fill="#fff" stroke="#2a2a2a" stroke-width="1"/>
<rect x="591.400" y="364.600" width="25" height="25" fill="#fff" stroke="#2a2a2a" stroke-width="1"/>
<g fill="none" stroke="#dcdcdc" stroke-width="1.300"><path d="M625 366h3.400a3 3 0 0 1 3 3v2.400"/><path d="M623.300 366l3-2.400v4.800zM631.400 373l-2.400-3h4.800z" fill="#dcdcdc" stroke="none"/></g>
<rect x="593.400" y="400.400" width="6.600" height="6.600" fill="#c4c4c0"/><rect x="590.300" y="397.400" width="6.400" height="6.400" fill="#2a2a2a" stroke="#cfcfcf" stroke-width="1"/>
<!-- bottom icons -->
<rect x="588.500" y="419.600" width="16.400" height="12.400" fill="#4a4a4a" stroke="#b4a8a8" stroke-width="1"/><circle cx="596.700" cy="425.800" r="4.200" fill="none" stroke="#e2e2e2" stroke-width="1.100" stroke-dasharray="1 1.200"/>
<rect x="621.400" y="423" width="11.400" height="9.600" fill="url(#rg)" stroke="#d8d8d8" stroke-width="1.300"/><rect x="626.400" y="420.200" width="11.400" height="9.400" fill="url(#rg)" stroke="#e2e2e2" stroke-width="1.300"/>
</svg>

 <div class="cb" style="left:136px"></div><div class="lbl" style="left:156px">Resize Windows to Fit</div>
 <div class="cb" style="left:287px"></div><div class="lbl" style="left:307px">Zoom All Windows</div>
 <div class="cb" style="left:419px;opacity:.6"></div><div class="lbl" style="left:439px;color:#9a9a9a;font-size:12.300px">Scrubby Zoom</div>
 <div class="abs" style="left:529px;top:36px;width:93.500px;height:19.500px;border:1px solid #3a3a3a;border-radius:3px;background:linear-gradient(#5b5b5b,#565656);color:#c8c8c8;text-align:center;line-height:17.500px;font-size:12.300px;padding-left:0px">Actual Pixels</div>
</div>
</body></html>
